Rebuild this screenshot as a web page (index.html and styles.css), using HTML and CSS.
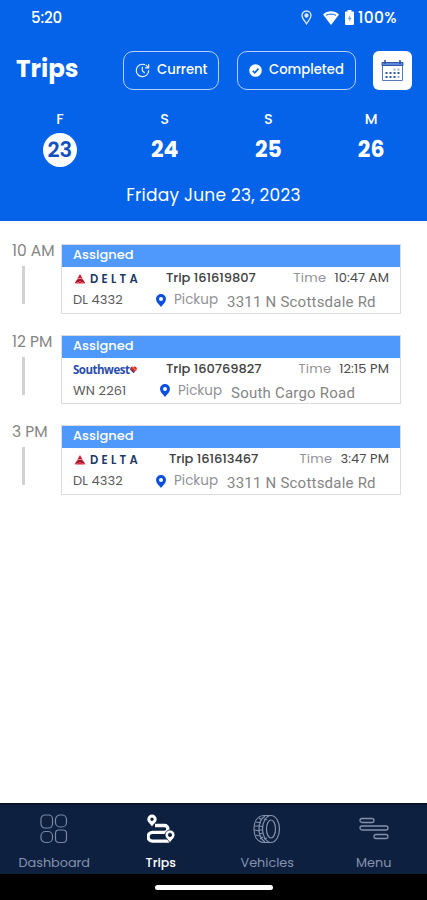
FILE: index.html
```html
<!DOCTYPE html>
<html lang="en">
<head>
    <meta charset="UTF-8">
    <meta name="viewport" content="width=device-width, initial-scale=1.0">
    <title>Trips</title>
    <link rel="stylesheet" href="styles.css">
</head>
<body>
    <!-- Shared shapes -->
    <svg width="0" height="0" class="defs">
        <symbol id="pin" viewBox="0 0 10 13">
            <path fill-rule="evenodd" d="M5 0a5 5 0 0 0-5 5c0 3 3 5.500 5 8 2-2.500 5-5 5-8a5 5 0 0 0-5-5zm0 3a2 2 0 1 1 0 4 2 2 0 0 1 0-4z" fill="#0b4fe0"/>
        </symbol>
        <symbol id="delta" viewBox="0 0 12 10">
            <path d="M6 0l2.800 5L6 4 3.200 5z" fill="#d3182f"/>
            <path d="M3 5.500L6 4.500v3L.5 9.500zM9 5.500L6 4.500v3l5.500 2z" fill="#a81530"/>
            <path d="M1 9.500L6 7.500l5 2z" fill="#e0243c"/>
        </symbol>
    </svg>

    <div class="app">
        <header class="header">
            <div class="status-bar">
                <span class="clock">5:20</span>
                <div class="status-icons">
                    <svg width="11" height="15" viewBox="0 0 11 15" fill="none" stroke="#dfe9ff" stroke-width="1.300">
                        <path d="M5.500 1A4.500 4.500 0 0 0 1 5.500C1 8.500 3.800 11 5.500 13.800 7.200 11 10 8.500 10 5.500A4.500 4.500 0 0 0 5.500 1z"/>
                        <circle cx="5.500" cy="5.500" r="1.500" fill="#dfe9ff"/>
                    </svg>
                    <svg class="wifi" width="16" height="14" viewBox="0 0 16 14">
                        <path d="M0 3.500C4.500-.8 11.500-.8 16 3.500L8 14z" fill="#fff"/>
                        <path d="M3 4.300C6 2.700 10 2.700 13 4.300" fill="none" stroke="#0463e8" stroke-width="1"/>
                    </svg>
                    <svg class="battery" width="9" height="15" viewBox="0 0 9 15">
                        <path d="M2.500 0h4v1.500H8a1 1 0 0 1 1 1V14a1 1 0 0 1-1 1H1a1 1 0 0 1-1-1V2.500a1 1 0 0 1 1-1h1.500z" fill="#fff"/>
                        <path d="M5.200 5L2.800 9h1.500v2.800L6.500 8H5.200z" fill="#6c9ff0"/>
                    </svg>
                    <span class="percent">100%</span>
                </div>
            </div>

            <div class="title-row">
                <h1>Trips</h1>
                <button class="filter current">
                    <svg width="15" height="15" viewBox="0 0 15 15" fill="none" stroke="#e6eeff" stroke-width="1.200" stroke-linecap="round">
                        <path d="M9.500 1.600A6.200 6.200 0 1 0 13.700 7.500M11 2.200l2.500 2.500M13.700 1.500v3.300h-3.200"/>
                        <path d="M7.300 4.200v3.600l2 1.700"/>
                    </svg>
                    <span>Current</span>
                </button>
                <button class="filter completed">
                    <svg width="13" height="13" viewBox="0 0 13 13">
                        <circle cx="6.500" cy="6.500" r="6.300" fill="#fff"/>
                        <path d="M3.700 6.800l2 2L9.500 4.600" fill="none" stroke="#0463e8" stroke-width="1.600"/>
                    </svg>
                    <span>Completed</span>
                </button>
                <button class="calendar">
                    <svg width="23" height="23" viewBox="0 0 23 23" fill="none" stroke="#3158a8">
                        <path d="M1.500 3.500h20v18h-20z" stroke="#5579bd"/>
                        <path d="M1 3.500h21v3H1z" fill="#5c87d8"/>
                        <path d="M4 1v4M19 1v4" stroke-width="1.600"/>
                        <path d="M12.500 10.500h2M16.500 10.500h2" stroke="#9bb1dc" stroke-width="2"/>
                        <path d="M4.500 14h14M4.500 18h10" stroke-width="2" stroke-dasharray="2 2"/>
                        <path d="M16.500 18h2" stroke="#9bb1dc" stroke-width="2"/>
                    </svg>
                </button>
            </div>

            <div class="days">
                <div class="day active"><span>F</span><b>23</b></div>
                <div class="day"><span>S</span><b>24</b></div>
                <div class="day"><span>S</span><b>25</b></div>
                <div class="day"><span>M</span><b>26</b></div>
            </div>
            <div class="full-date">Friday June 23, 2023</div>
        </header>

        <main class="trips">
            <section class="slot">
                <div class="hour"><span>10 AM</span><i></i></div>
                <div class="card">
                    <div class="card-status">Assigned</div>
                    <div class="row">
                        <div class="airline delta"><svg width="12" height="10"><use href="#delta"/></svg><span>DELTA</span></div>
                        <span class="trip-no">Trip 161619807</span>
                        <span class="label time-label">Time</span>
                        <span class="time">10:47 AM</span>
                    </div>
                    <div class="row pickup-row">
                        <span class="flight">DL 4332</span>
                        <svg width="10" height="13"><use href="#pin"/></svg>
                        <span class="label">Pickup</span>
                        <span class="address">3311 N Scottsdale Rd</span>
                    </div>
                </div>
            </section>

            <section class="slot southwest-slot">
                <div class="hour"><span>12 PM</span><i></i></div>
                <div class="card">
                    <div class="card-status">Assigned</div>
                    <div class="row">
                        <div class="airline southwest">
                            <span>Southwest</span>
                            <svg width="7" height="7" viewBox="0 0 7 7">
                                <path d="M3.500 7L.5 4C-.8 1.500 2-.5 3.500 1 5-.5 7.800 1.500 6.500 4z" fill="#d62430"/>
                                <path d="M.5 4L3.500 7 4.300 6.200 .6 2.500C.2 3 .2 3.500 .5 4z" fill="#294eac"/>
                                <path d="M2.500 1L6 4.500" stroke="#f5b335" stroke-width="1"/>
                            </svg>
                        </div>
                        <span class="trip-no">Trip 160769827</span>
                        <span class="label time-label">Time</span>
                        <span class="time">12:15 PM</span>
                    </div>
                    <div class="row pickup-row">
                        <span class="flight">WN 2261</span>
                        <svg width="10" height="13"><use href="#pin"/></svg>
                        <span class="label">Pickup</span>
                        <span class="address">South Cargo Road</span>
                    </div>
                </div>
            </section>

            <section class="slot afternoon-slot">
                <div class="hour"><span>3 PM</span><i></i></div>
                <div class="card">
                    <div class="card-status">Assigned</div>
                    <div class="row">
                        <div class="airline delta"><svg width="12" height="10"><use href="#delta"/></svg><span>DELTA</span></div>
                        <span class="trip-no">Trip 161613467</span>
                        <span class="label time-label">Time</span>
                        <span class="time">3:47 PM</span>
                    </div>
                    <div class="row pickup-row">
                        <span class="flight">DL 4332</span>
                        <svg width="10" height="13"><use href="#pin"/></svg>
                        <span class="label">Pickup</span>
                        <span class="address">3311 N Scottsdale Rd</span>
                    </div>
                </div>
            </section>
        </main>

        <nav class="bottom-nav">
            <div class="nav-item dashboard">
                <svg width="28" height="30" viewBox="0 0 28 30" fill="none" stroke="#7787a5" stroke-width="1.200">
                    <rect x="1" y="1" width="11.500" height="13" rx="4"/>
                    <rect x="15.500" y="1" width="11" height="12" rx="4.500"/>
                    <rect x="1" y="17.500" width="11.500" height="11" rx="4.500"/>
                    <rect x="15.500" y="16" width="11" height="12.500" rx="3.500"/>
                </svg>
                <span>Dashboard</span>
            </div>
            <div class="nav-item trips-tab">
                <svg width="28" height="30" viewBox="0 0 28 30" fill="none" stroke="#fff">
                    <path d="M8 11.500h9.500a3.400 3.400 0 0 1 0 6.800H5.500a4.400 4.400 0 0 0 0 8.800H22" stroke-width="3.300"/>
                    <path fill="#fff" fill-rule="evenodd" stroke="none" d="M5 .5A4.700 4.700 0 0 0 .3 5.200C.3 8 3.300 9.500 5 12.500 6.700 9.500 9.700 8 9.700 5.200A4.700 4.700 0 0 0 5 .5zm0 3a1.700 1.700 0 1 1 0 3.400 1.700 1.700 0 0 1 0-3.400z"/>
                    <path fill="#fff" fill-rule="evenodd" stroke="#0d2040" stroke-width=".8" d="M23 16a5 5 0 0 0-5 5c0 3 3.300 4.500 5 8 1.700-3.500 5-5 5-8a5 5 0 0 0-5-5zm0 3.200a1.700 1.700 0 1 1 0 3.400 1.700 1.700 0 0 1 0-3.400z"/>
                </svg>
                <span>Trips</span>
            </div>
            <div class="nav-item vehicles">
                <svg width="28" height="30" viewBox="0 0 28 30" fill="none" stroke="#8292ae" stroke-width="1.200">
                    <ellipse cx="18" cy="15" rx="8.500" ry="13.500"/>
                    <ellipse cx="18" cy="15" rx="4.500" ry="9"/>
                    <path d="M18 1.500h-7C4 2 1 8 1 15s3 13 10 13.500h7"/>
                    <path d="M12 2C7.500 5 6 10 6 15s1.500 10 6 13M6 4l3 2M3 8l5 1M11 5l3 1M1.500 12H6M1.500 16l5 1M7 12l3 1M6 20l4-1M2.500 21l4 1M7 25l3-2M11 25l3-1M6.500 16h3"/>
                </svg>
                <span>Vehicles</span>
            </div>
            <div class="nav-item menu">
                <svg width="30" height="30" viewBox="0 0 30 30" fill="none" stroke="#8292ae" stroke-width="1.300">
                    <rect x="1" y="4.500" width="14" height="4" rx="2"/>
                    <rect x="1" y="12" width="28" height="4" rx="2"/>
                    <rect x="15" y="20.500" width="14" height="4" rx="2"/>
                </svg>
                <span>Menu</span>
            </div>
        </nav>
        <div class="home-bar"><i></i></div>
    </div>
</body>
</html>
```
FILE: styles.css
```css
* {
    box-sizing: border-box;
}

body {
    margin: 0;
    font-family: Poppins, Inter, sans-serif;
    background-color: #ffffff;
}

svg {
    display: block;
    flex-shrink: 0;
}

.defs {
    position: absolute;
}

.app {
    width: 427px;
    height: 900px;
    display: flex;
    flex-direction: column;
    overflow: hidden;
}

/* Header */
.header {
    height: 221px;
    background-color: #0463e8;
    color: #ffffff;
    flex-shrink: 0;
}

.status-bar {
    height: 35px;
    padding: 0 29px 0 31px;
    display: flex;
    align-items: center;
    justify-content: space-between;
    font-size: 15px;
    font-weight: 500;
    line-height: 20px;
    letter-spacing: -0.100px;
}

.status-icons {
    display: flex;
    align-items: center;
}

.wifi {
    margin-left: 11px;
}

.battery {
    margin: 0 4px 0 6px;
}

.percent {
    width: 40px;
    white-space: nowrap;
    font-size: 15.500px;
    letter-spacing: 0.300px;
}

.title-row {
    height: 39px;
    margin-top: 16px;
    padding: 0 15px 0 16px;
    display: flex;
    align-items: center;
}

h1 {
    width: 107px;
    margin: 0;
    font-size: 24.500px;
    font-weight: 700;
    line-height: 34px;
    padding-bottom: 4px;
}

button {
    font-family: inherit;
    padding: 0;
    cursor: pointer;
}

.filter {
    height: 39px;
    display: flex;
    align-items: center;
    color: #ffffff;
    background: none;
    border: 1.500px solid #b6d0fa;
    border-radius: 10px;
    font-size: 13.200px;
    font-weight: 500;
}

.filter span {
    padding-bottom: 2px;
}

.current {
    width: 96px;
    margin-right: 18px;
    padding-left: 11px;
    gap: 7px;
}

.completed {
    width: 119px;
    margin-right: 17px;
    padding-left: 11px;
    gap: 7px;
}

.calendar {
    width: 39px;
    height: 39px;
    display: flex;
    align-items: center;
    justify-content: center;
    border: none;
    border-radius: 6px;
    background-color: #ffffff;
}

.days {
    display: grid;
    grid-template-columns: repeat(4, 1fr);
    margin-top: 19px;
    padding: 0 4px 0 8px;
}

.day {
    display: flex;
    flex-direction: column;
    align-items: center;
}

.day:nth-child(2),
.day:nth-child(3) {
    padding-left: 2px;
}

.day span {
    font-size: 14.500px;
    font-weight: 500;
    line-height: 20px;
}

.day b {
    width: 34px;
    height: 34px;
    margin-top: 4px;
    line-height: 34px;
    text-align: center;
    font-size: 22px;
    font-weight: 700;
}

.active b {
    border-radius: 50%;
    background-color: #ffffff;
    color: #1250c0;
    font-weight: 600;
    font-size: 21px;
}

.full-date {
    margin-top: 15px;
    text-align: center;
    font-size: 17px;
    line-height: 26px;
    letter-spacing: 0.230px;
}

/* Trip list */
.trips {
    flex: 1;
    padding: 23px 26px 0 12px;
    display: flex;
    flex-direction: column;
    gap: 21px;
}

.slot {
    display: flex;
    height: 69.500px;
}

.hour {
    width: 49px;
    flex-shrink: 0;
    color: #858585;
    font-size: 15.500px;
    line-height: 13px;
    white-space: nowrap;
}

.hour i {
    display: block;
    width: 3px;
    height: 38px;
    margin: 9px 0 0 10px;
    background-color: #d2d2d2;
}

.card {
    flex: 1;
    border: 1px solid #dcdcdc;
    border-width: 1px 1.500px;
}

.card-status {
    height: 22px;
    padding-left: 11px;
    color: #ffffff;
    background-color: #4f99fc;
    font-size: 13px;
    font-weight: 500;
    line-height: 20px;
}

.row {
    height: 22px;
    padding: 0 11px;
    display: flex;
    align-items: center;
    font-size: 13px;
    white-space: nowrap;
}

.airline {
    width: 93px;
    display: flex;
    align-items: center;
}

.delta {
    padding: 2px 0 0 1px;
    gap: 4px;
    color: #213865;
    font-size: 11.500px;
    font-weight: 600;
    letter-spacing: 3.300px;
}

.southwest {
    padding-top: 2px;
    gap: 1px;
    color: #294eac;
    font-family: "Open Sans", sans-serif;
    font-size: 11.500px;
    font-weight: 700;
    letter-spacing: -0.500px;
}

.trip-no {
    color: #414141;
    font-size: 13px;
    font-weight: 500;
    letter-spacing: -0.050px;
}

.label {
    color: #929298;
}

.time-label {
    margin-left: auto;
    letter-spacing: 0.300px;
}

.time {
    margin-left: 8px;
    color: #4b4b4b;
    letter-spacing: 0.100px;
}

.flight {
    width: 83px;
    color: #5c5c5c;
    letter-spacing: 0.100px;
}

.pickup-row .label {
    margin-left: 8px;
    width: 44px;
    font-size: 13.500px;
}

.address {
    margin-left: 9px;
    padding-top: 4px;
    font-family: Roboto, sans-serif;
    font-size: 15px;
    letter-spacing: 0.220px;
    color: #858585;
}

.southwest-slot .flight {
    width: 87px;
}

.afternoon-slot .airline {
    width: 96px;
}

/* Bottom navigation */
.bottom-nav {
    height: 71px;
    padding: 9px 0 0 1px;
    display: grid;
    grid-template-columns: repeat(4, 1fr);
    background-color: #0d2040;
    border-top: 2px solid #07142b;
    color: #8592ad;
}

.nav-item {
    display: flex;
    flex-direction: column;
    align-items: center;
    font-size: 12.800px;
}

.nav-item span {
    margin-top: 10px;
    line-height: 18px;
}

.trips-tab {
    color: #ffffff;
    font-size: 12.500px;
    font-weight: 500;
}

.home-bar {
    height: 26px;
    padding-top: 11px;
    background-color: #000000;
}

.home-bar i {
    display: block;
    width: 118px;
    height: 5px;
    margin: 0 auto;
    border-radius: 3px;
    background-color: #ffffff;
}
```
